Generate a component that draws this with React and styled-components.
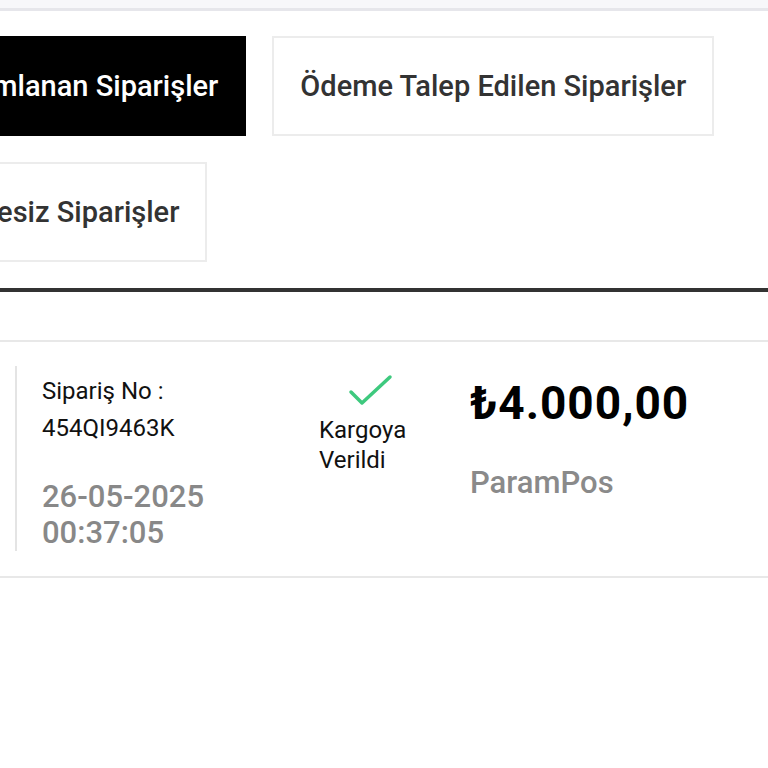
import React from 'react';
import styled, { createGlobalStyle } from 'styled-components';

const GlobalStyle = createGlobalStyle`
  html, body {
    margin: 0;
    padding: 0;
    background: #ffffff;
    font-family: Roboto, "Noto Sans", sans-serif;
  }
`;

const Page = styled.div`
  width: 768px;
  height: 768px;
  overflow: hidden;
  background: #ffffff;
`;

const TopStrip = styled.div`
  height: 8px;
  background: #f7f7fa;
  border-bottom: 3px solid #e6e6eb;
`;

// the tab row is scrolled sideways, so the first tabs start off-screen
const Tabs = styled.div`
  display: flex;
  flex-wrap: wrap;
  gap: 26px 26px;
  padding: 25px 0 26px;
  margin-left: -108px;
  width: 860px;
`;

const Tab = styled.button`
  height: 100px;
  padding: 0 26px;
  font-family: Roboto, sans-serif;
  font-size: 29px;
  font-weight: 500;
  color: ${props => (props.active ? '#ffffff' : '#333333')};
  background: ${props => (props.active ? '#000000' : '#ffffff')};
  border: 2px solid ${props => (props.active ? '#000000' : '#ececec')};
  white-space: nowrap;
`;

const Divider = styled.div`
  height: 4px;
  background: #333333;
`;

const List = styled.div`
  padding-top: 48px;
`;

const Card = styled.div`
  display: flex;
  align-items: flex-start;
  border-top: 2px solid #e8e8e8;
  border-bottom: 2px solid #e8e8e8;
  padding: 24px 0 25px 15px;
`;

const InfoCol = styled.div`
  width: 304px;
  border-left: 2px solid #e4e4e4;
  padding: 7px 0 0 25px;
  box-sizing: border-box;
`;

const Label = styled.div`
  font-size: 24px;
  color: #111111;
  line-height: 37px;
`;

const DateText = styled.div`
  margin-top: 32px;
  font-size: 31px;
  font-weight: 500;
  color: #888888;
  line-height: 36px;
`;

const StatusCol = styled.div`
  width: 151px;
  padding-top: 8px;
  display: flex;
  flex-direction: column;
  align-items: flex-start;
`;

const CheckIcon = styled.svg`
  margin-left: 29px;
  width: 46px;
  height: 34px;
`;

const StatusText = styled.div`
  margin-top: 7px;
  font-size: 24px;
  color: #111111;
  line-height: 30px;
`;

const PriceCol = styled.div`
  padding-top: 12px;
`;

const Price = styled.div`
  font-size: 46px;
  font-weight: 700;
  letter-spacing: 1px;
  color: #000000;
  line-height: 50px;
`;

const Method = styled.div`
  margin-top: 36px;
  font-size: 31px;
  font-weight: 500;
  color: #8a8a8a;
`;

export default function App() {
  return (
    <Page>
      <GlobalStyle />
      <TopStrip />
      <Tabs>
        <Tab active>Tamamlanan Siparişler</Tab>
        <Tab>Ödeme Talep Edilen Siparişler</Tab>
        <Tab>Ödemesiz Siparişler</Tab>
      </Tabs>
      <Divider />
      <List>
        <Card>
          <InfoCol>
            <Label>Sipariş No :</Label>
            <Label>454QI9463K</Label>
            <DateText>
              26-05-2025
              <br />
              00:37:05
            </DateText>
          </InfoCol>
          <StatusCol>
            <CheckIcon viewBox="0 0 46 34" fill="none">
              <path d="M3 18 L14 29 L42 3" stroke="#3ec97e" strokeWidth="3.5" strokeLinecap="round" strokeLinejoin="round" />
            </CheckIcon>
            <StatusText>
              Kargoya
              <br />
              Verildi
            </StatusText>
          </StatusCol>
          <PriceCol>
            <Price>₺4.000,00</Price>
            <Method>ParamPos</Method>
          </PriceCol>
        </Card>
      </List>
    </Page>
  );
}
